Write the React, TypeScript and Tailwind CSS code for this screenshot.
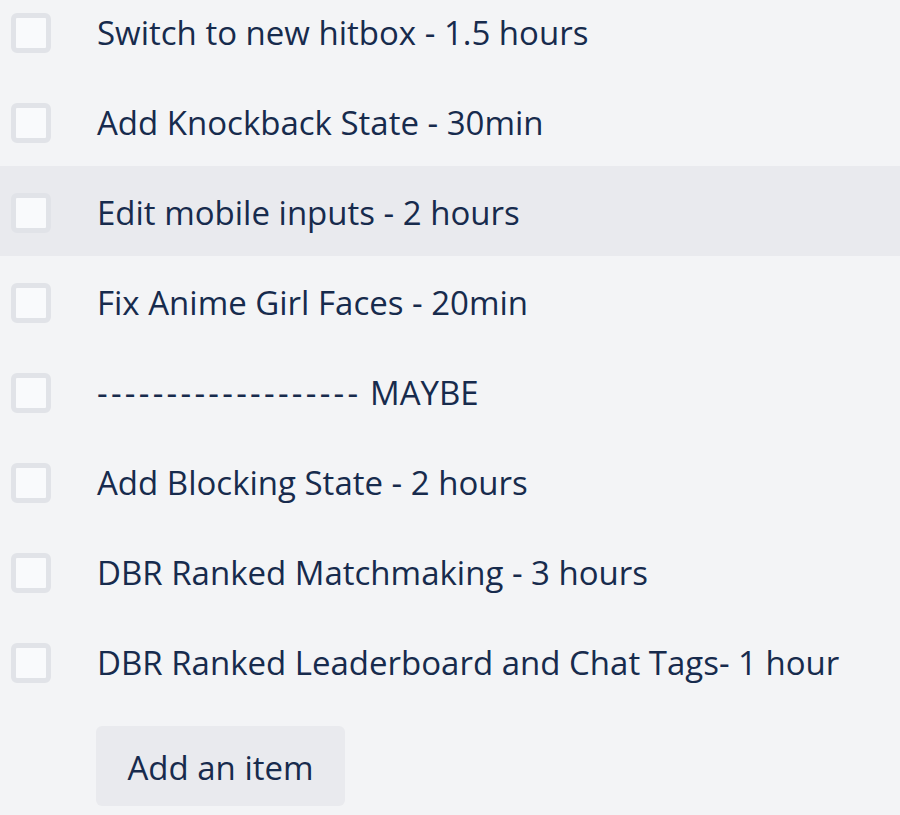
import React from 'react';

const items = [
  'Switch to new hitbox - 1.5 hours',
  'Add Knockback State - 30min',
  'Edit mobile inputs - 2 hours',
  'Fix Anime Girl Faces - 20min',
  '------------------- MAYBE',
  'Add Blocking State - 2 hours',
  'DBR Ranked Matchmaking - 3 hours',
  'DBR Ranked Leaderboard and Chat Tags- 1 hour',
];

// Long runs of hyphens render narrower in Open Sans than in the original font
const renderText = (text: string) => {
  const m = text.match(/^(-{3,})(.*)$/);
  if (!m) return text;
  return (
    <>
      <span className="tracking-[3.3px]">{m[1]}</span>
      {m[2]}
    </>
  );
};

const ChecklistRow: React.FC<{ text: string; hovered?: boolean }> = ({ text, hovered }) => (
  <div className={`flex h-[90px] items-center ${hovered ? 'bg-[#e9eaee]' : ''}`}>
    <div className="ml-[11px] mt-[4px] h-[40px] w-[40px] shrink-0 rounded-[6px] border-[5px] border-[#e1e3e8] bg-[#f9fafc]" />
    <span className="ml-[46px] mt-[4px] whitespace-nowrap text-[#172b4d]">{renderText(text)}</span>
  </div>
);

export default function App() {
  return (
    <div
      className="h-[815px] w-[900px] overflow-hidden bg-[#f3f4f6] text-[33px]"
      style={{ fontFamily: '"Open Sans", "Noto Sans", sans-serif' }}
    >
      <div className="-mt-[14px]">
        {items.map((t, i) => (
          <ChecklistRow key={i} text={t} hovered={i === 2} />
        ))}
      </div>
      <button className="ml-[96px] mt-[20px] h-[80px] w-[249px] rounded-[6px] bg-[#e9eaee] pt-[4px] text-[#172b4d]">
        Add an item
      </button>
    </div>
  );
}
